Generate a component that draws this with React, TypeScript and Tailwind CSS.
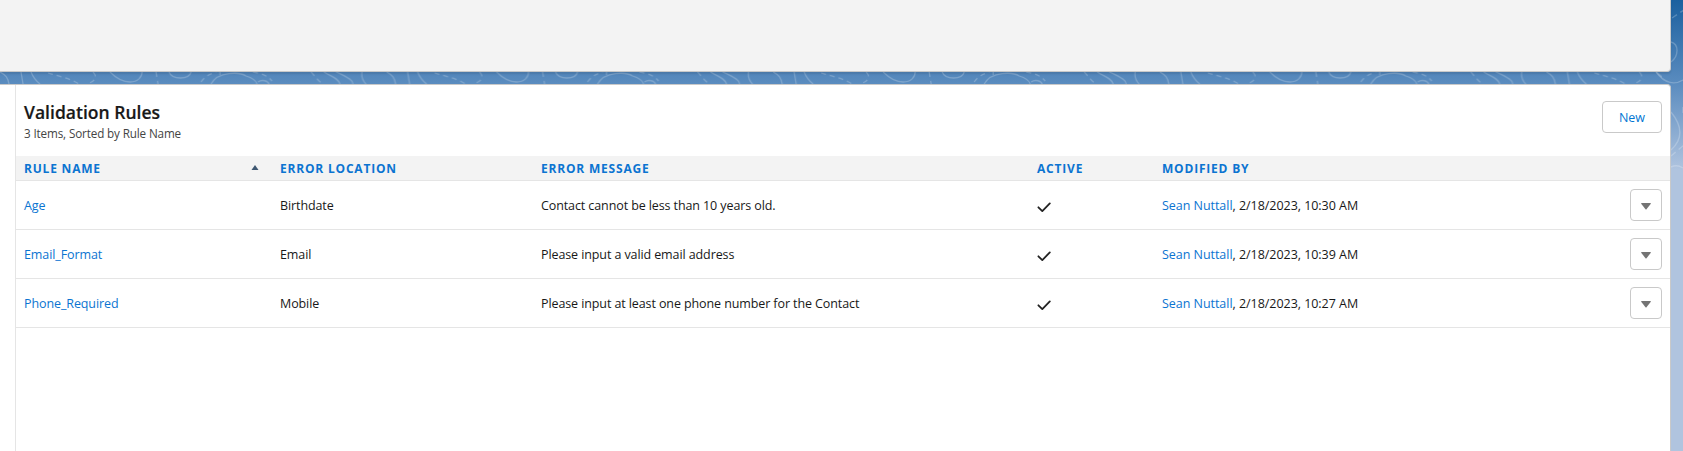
const rules = [
  { name: "Age", location: "Birthdate", message: "Contact cannot be less than 10 years old.", time: "10:30 AM" },
  { name: "Email_Format", location: "Email", message: "Please input a valid email address", time: "10:39 AM" },
  { name: "Phone_Required", location: "Mobile", message: "Please input at least one phone number for the Contact", time: "10:27 AM" },
];

const columns = "grid grid-cols-[256px_261px_496px_125px_1fr_40px] pl-2";

function Contours() {
  return (
    <svg className="absolute inset-0" width="1683" height="451" fill="none">
      <defs>
        <pattern id="contours" x="0" y="72" width="386.6" height="400" patternUnits="userSpaceOnUse">
          <g stroke="#fff" strokeOpacity="0.22" strokeWidth="1.3" fill="none">
            <path d="M0 0C6 3 8 6 9 12M21 0 23 12M31 0C33 5 36 9 40 12M110 0C118 8 125 10 130 10 138 10 142 5 142 0M169 0C172 8 189 8 191 0M220 0V3M211 12C218-1 240 0 246 4 253 6 256 9 257 12M258 10C262 7 268 9 269 12M324 0C332 5 338 6 340 12M336 0C350 6 353 9 353 12M362 0C361 6 364 10 366 12" />
            <path strokeDasharray="5 4" d="M48 1C58 4 69 6 79 12M93 0C98 5 95 10 86 12M156 0 158 12M201 10C205 4 210 2 216 0M253 0C263 2 268 4 272 9M311 0C315 4 318 9 323 12" />
          </g>
        </pattern>
      </defs>
      <rect y="72" width="1662" height="13" fill="url(#contours)" />
      <g stroke="#fff" strokeOpacity="0.22" strokeWidth="1.4">
        <path d="M1656 72C1665 84 1675 85 1683 80M1671 42C1679 44 1679 56 1671 62M1671 112C1684 128 1682 140 1671 150M1671 167C1675 165 1680 166 1683 168" />
        <path strokeDasharray="6 4" d="M1672 18 1684 10M1671 156 1684 145M1683 107V116" />
      </g>
    </svg>
  );
}

export default function App() {
  return (
    <div className="relative h-[451px] w-[1683px] overflow-hidden bg-[linear-gradient(to_bottom,#1b609f_0px,#5b8cbf_84px,#b0c4df_170px)] font-['Open_Sans','Noto_Sans',sans-serif] text-[12.5px] text-[#181818]">
      <Contours />
      <div className="relative flex h-full flex-col gap-3 pr-3">
        <div className="h-[72px] shrink-0 rounded-br border-r border-b border-[#c9c9c9] bg-[#f3f3f3] shadow-[0_2px_2px_rgba(0,0,0,0.1)]" />
        <div className="flex min-h-0 flex-1 rounded-tr border-t border-r border-[#c9c9c9] bg-white pl-[15px]">
          <section className="flex-1 border-l border-[#e5e5e5]">
            <header className="flex h-[71px] items-start justify-between pt-4 pr-2 pl-2">
              <div>
                <h2 className="text-[17.5px] leading-[23px] font-semibold tracking-[0.02px] [-webkit-text-stroke:0.2px_#181818]">Validation Rules</h2>
                <p className="text-[11.7px] leading-[18px] tracking-[-0.14px] text-[#444]">3 Items, Sorted by Rule Name</p>
              </div>
              <button className="h-8 w-[60px] rounded border border-[#c9c9c9] bg-white pt-0.5 text-[#0176d3]">New</button>
            </header>
            <div className={columns + " h-[25px] items-center border-b border-[#e5e5e5] bg-[#f3f3f3] text-[12px] font-bold tracking-[0.8px] text-[#0b74d1]"}>
              <div className="flex items-center justify-between pr-[21px]">
                <span className="pt-0.5">RULE NAME</span>
                <svg className="-mt-px" width="8" height="5" viewBox="0 0 8 5"><path d="M4 0 7.5 5H.5Z" fill="#3e5771" /></svg>
              </div>
              <span className="pt-0.5">ERROR LOCATION</span>
              <span className="pt-0.5">ERROR MESSAGE</span>
              <span className="pt-0.5">ACTIVE</span>
              <span className="pt-0.5">MODIFIED BY</span>
            </div>
            {rules.map((rule) => (
              <div key={rule.name} className={columns + " h-[49px] items-center border-b border-[#e5e5e5] tracking-[-0.1px]"}>
                <a className="pt-0.5 text-[#0b74d1]">{rule.name}</a>
                <span className="pt-0.5">{rule.location}</span>
                <span className="pt-0.5">{rule.message}</span>
                <svg className="mt-[4px]" width="14" height="11" viewBox="0 0 14 11" fill="none">
                  <path d="M1.4 5.3 5.3 9.1 12.8 1.4" stroke="#222" strokeWidth="1.8" strokeLinecap="round" strokeLinejoin="round" />
                </svg>
                <span className="pt-0.5 tracking-[-0.04px]"><a className="text-[#0b74d1]">Sean Nuttall</a>, 2/18/2023, {rule.time}</span>
                <button className="flex size-8 items-center justify-center rounded border border-[#c9c9c9] bg-white">
                  <svg className="mt-[3px]" width="10" height="7" viewBox="0 0 10 7"><path d="M.6 0H9.4Q10.2.2 9.6 1L5.5 6.3Q5 6.9 4.5 6.3L.4 1Q-.2.2.6 0Z" fill="#747474" /></svg>
                </button>
              </div>
            ))}
          </section>
        </div>
      </div>
    </div>
  );
}
